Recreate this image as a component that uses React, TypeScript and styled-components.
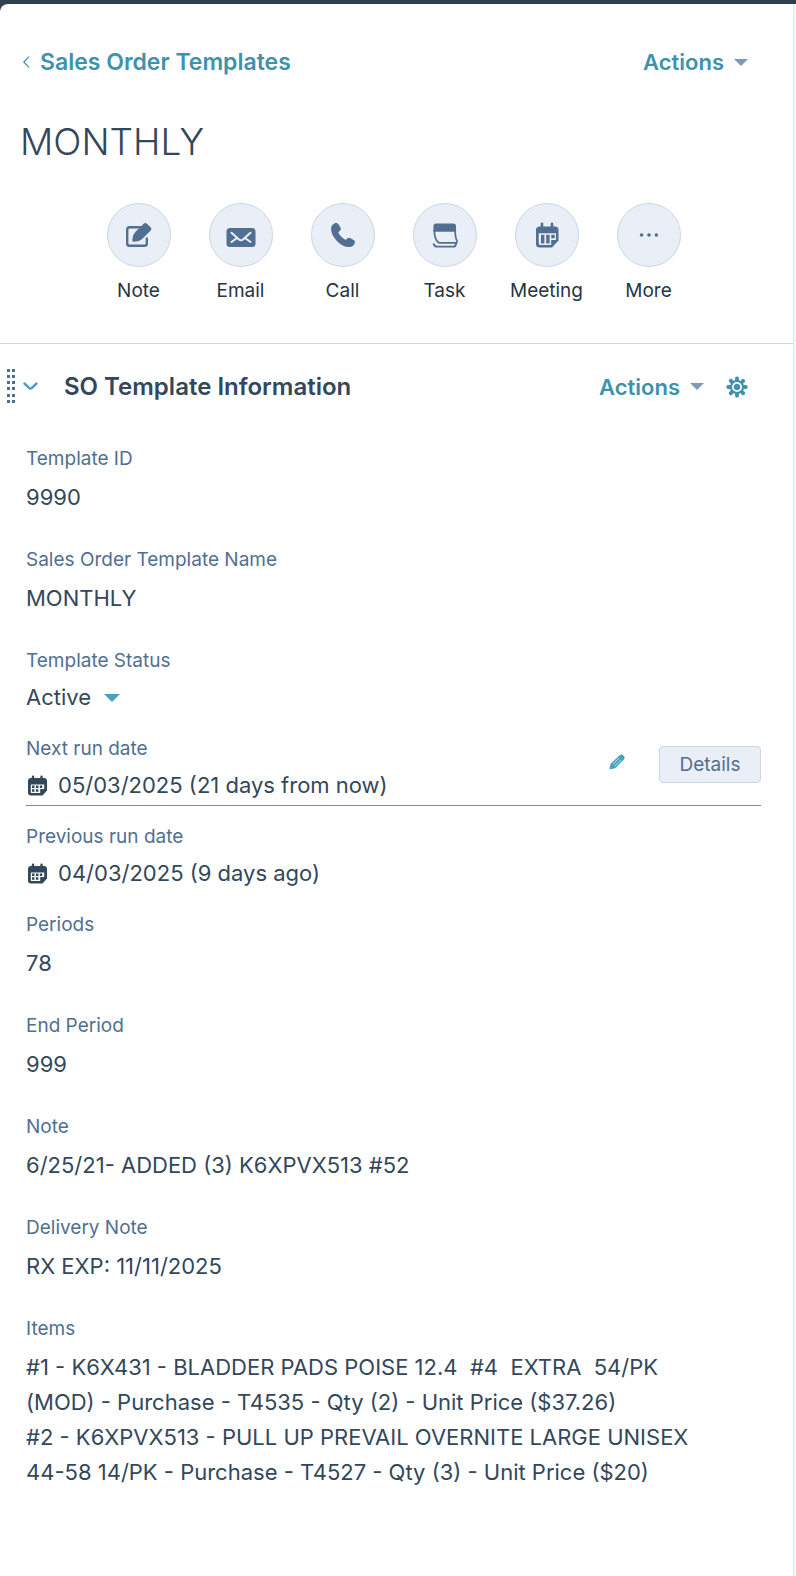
import React from "react";
import styled, { createGlobalStyle } from "styled-components";

const color = {
  navy: "#33475b",
  bar: "#2e3f50",
  slate: "#516f90",
  link: "#4091ad",
  accent: "#45a2bf",
  muted: "#7f97b8",
  fill: "#eaeff7",
  border: "#cbd6e2",
  ink: "#253545",
};

const GlobalStyle = createGlobalStyle`
  *, *::before, *::after { box-sizing: border-box; }
  body {
    margin: 0;
    background: ${color.bar};
    color: ${color.navy};
    font-family: Inter, "Liberation Sans", sans-serif;
    font-weight: 400;
  }
  button, select { font: inherit; color: inherit; }
`;

const Page = styled.div`
  min-height: 100vh;
  display: flex;
  flex-direction: column;
  padding-top: 4px;
`;

const Sidebar = styled.main`
  flex: 1;
  background: #fff;
  border-right: 1px solid #dfe3ee;
  border-top-left-radius: 8px;
`;

const Backdrop = styled.div`
  flex: 1;
  display: flex;
  flex-direction: column;
  padding-right: 2px;
  background: linear-gradient(to left, #f5f8fa 8px, transparent 8px);
`;

const TopRow = styled.header`
  display: flex;
  align-items: center;
  justify-content: space-between;
  padding: 42px 45px 0 22px;
`;

const BackLink = styled.a`
  display: flex;
  align-items: center;
  gap: 10px;
  color: ${color.link};
  font-size: 23px;
  font-weight: 600;
  line-height: 32px;
  text-decoration: none;
`;

const PlainButton = styled.button`
  display: flex;
  align-items: center;
  padding: 0;
  border: 0;
  background: none;
  color: ${color.link};
  cursor: pointer;
`;

const MenuButton = styled(PlainButton)`
  gap: 10px;
  font-size: 22px;
  font-weight: 600;
  line-height: 30px;

  svg { color: ${color.muted}; }
`;

const Title = styled.h1`
  margin: 40px 20px 0;
  font-size: 37px;
  font-weight: 300;
  line-height: 48px;
`;

const QuickActions = styled.nav`
  display: grid;
  grid-template-columns: repeat(6, 102px);
  justify-content: center;
  padding: 37px 6px 40px 0;
`;

const QuickAction = styled.button`
  display: flex;
  flex-direction: column;
  align-items: center;
  gap: 12px;
  padding: 0;
  border: 0;
  background: none;
  color: ${color.ink};
  font-size: 19px;
  line-height: 24px;
  cursor: pointer;
`;

const Circle = styled.span`
  display: grid;
  place-items: center;
  width: 64px;
  height: 64px;
  border: 1px solid ${color.border};
  border-radius: 50%;
  background: ${color.fill};
  color: ${color.slate};
`;

const Card = styled.section`
  border-top: 1px solid ${color.border};
  padding: 25px 32px 60px 0;
`;

const CardHeader = styled.div`
  display: flex;
  align-items: center;
  padding: 0 13px 0 7px;
`;

const DragHandle = styled.span`
  width: 8px;
  height: 35px;
  margin-right: 8px;
  color: ${color.slate};
`;

const CardTitle = styled.h2`
  flex: 1;
  margin: 0 0 0 26px;
  font-size: 24px;
  font-weight: 600;
  line-height: 32px;
`;

const GearButton = styled(PlainButton)`
  margin-left: 22px;
`;

const Fields = styled.dl`
  display: flex;
  flex-direction: column;
  margin: 43px 0 0 26px;
`;

const Field = styled.div<{ $compact?: boolean; $active?: boolean }>`
  display: flex;
  align-items: center;
  margin-bottom: ${(p) => (p.$active ? 19 : p.$compact ? 22 : 33)}px;
  padding-bottom: ${(p) => (p.$active ? 2 : 0)}px;
  border-bottom: ${(p) => (p.$active ? `1px solid ${color.accent}` : "0")};
`;

const FieldBody = styled.div<{ $compact?: boolean }>`
  flex: 1;
  display: flex;
  flex-direction: column;
  gap: ${(p) => (p.$compact ? 7 : 9)}px;
`;

const Label = styled.dt`
  color: ${color.slate};
  font-size: 19px;
  line-height: 24px;
`;

const Value = styled.dd`
  display: flex;
  align-items: center;
  gap: 10px;
  margin: 0;
  font-size: 22px;
  line-height: 35px;
`;

const ItemList = styled.dd`
  margin: 0;
  padding-right: 42px;
  font-size: 22px;
  line-height: 35px;
  white-space: pre-wrap;
`;

const StatusPicker = styled.span`
  display: inline-grid;
  align-items: center;
  color: ${color.navy};

  select, svg { grid-area: 1 / 1; }
  svg { justify-self: end; color: ${color.accent}; pointer-events: none; }
`;

const StatusSelect = styled.select`
  appearance: none;
  padding: 0 28px 0 0;
  border: 0;
  background: none;
  line-height: 35px;
  cursor: pointer;
`;

const PencilButton = styled(PlainButton)`
  margin-right: 34px;
  color: ${color.accent};
`;

const DetailsButton = styled.button`
  height: 37px;
  width: 102px;
  margin-bottom: 12px;
  padding: 0;
  border: 1px solid ${color.border};
  border-radius: 4px;
  background: ${color.fill};
  color: ${color.slate};
  font-size: 19px;
  cursor: pointer;
`;

const RowTools = styled.div`
  display: flex;
  align-items: center;

  ${PencilButton} { margin-bottom: 16px; }
`;

const Caret = ({ width = 14 }: { width?: number }) => (
  <svg width={width} height={width / 2} viewBox="0 0 14 7" fill="currentColor" aria-hidden>
    <path d="M0 0h14L7 7z" />
  </svg>
);

const NoteIcon = () => (
  <svg width="28" height="28" viewBox="0 0 28 28" aria-hidden>
    <path d="M15 6.200H4.500Q2.200 6.200 2.200 8.500V22.500Q2.200 24.800 4.500 24.800H19.500Q21.800 24.800 21.800 22.500V17.500" fill="none" stroke="currentColor" strokeWidth="2.400" strokeLinecap="round" />
    <path d="M7.400 20.600C7.100 16.200 8.300 13 11 10.300L18.700 2.700Q20.400 1.200 22 2.700L25.800 6.500Q27.200 8 25.700 9.600L17.700 17.400C14.900 19.900 11.700 20.900 7.400 20.600Z" fill="currentColor" />
  </svg>
);

const EmailIcon = () => (
  <svg width="30" height="30" viewBox="0 0 30 30" aria-hidden>
    <rect x=".5" y="8" width="29" height="19" rx="3.500" fill="currentColor" />
    <path d="M5.500 12.800L13 19.500Q15 21 17 19.500L24.500 12.800M5.500 22L10.300 18.500M24.500 22L19.700 18.500" fill="none" stroke={color.fill} strokeWidth="2.100" strokeLinecap="round" />
  </svg>
);

const PhoneIcon = () => (
  <svg width="26" height="26" viewBox="0 0 26 26" fill="currentColor" aria-hidden>
    <path d="M3.500 1.900L5.300 1.100Q7.300.5 8.400 2.200L10.600 5.700Q11.400 7.300 10.200 8.600L8.500 10.300Q8.200 11.500 11.500 14.800Q14.600 17.800 15.800 17.700L17.500 16.200Q18.800 15.200 20.300 16L24 18.200Q25.500 19.200 24.900 20.800Q23.500 25 19.400 25Q13 25.300 6.900 18.900Q.9 12.400 1 6.500Q1.200 3.200 3.500 1.900Z" />
  </svg>
);

const TaskIcon = () => (
  <svg width="28" height="28" viewBox="0 0 28 28" aria-hidden>
    <path d="M2.500 10.800V5.300Q2.500 2.500 5.300 2.500H22.200Q25 2.500 25 5.300V10.800Z" fill="currentColor" />
    <path d="M3.300 8.500Q3.200 17.500 7 21.200Q7.600 21.800 8.500 21.800H25Q26.600 21.600 25.900 19.600Q24 16 24.200 8.500" fill="none" stroke="currentColor" strokeWidth="1.700" strokeLinejoin="round" />
    <path d="M2.700 23Q3.200 25.700 6.300 25.700H22.500Q24.700 25.700 25.200 22.500" fill="none" stroke="currentColor" strokeWidth="1.700" strokeLinecap="round" />
  </svg>
);

const MeetingIcon = () => (
  <svg width="26" height="28" viewBox="0 0 26 28" aria-hidden>
    <path d="M8 2.800V8M18 2.800V8" stroke="currentColor" strokeWidth="2.600" strokeLinecap="round" />
    <path d="M5.500 5.500H21Q24.500 5.500 24.500 9V19.500L18 26.500H5.500Q2 26.500 2 23V9Q2 5.500 5.500 5.500Z" fill="currentColor" />
    <path d="M4.700 12.200H22V19H17.200V24H6.500Q4.700 24 4.700 22.200Z" fill={color.fill} />
    <path d="M7 13.800H10.400V22.600H7ZM12.200 13.800H15.600V22.600H12.200ZM17.300 13.800H20.700V17.200H17.300Z" fill="currentColor" />
  </svg>
);

const MoreIcon = () => (
  <svg width="20" height="6" viewBox="0 0 20 6" fill="currentColor" aria-hidden>
    <circle cx="2.600" cy="3" r="1.800" />
    <circle cx="10" cy="3" r="1.800" />
    <circle cx="17.400" cy="3" r="1.800" />
  </svg>
);

const CalendarIcon = () => (
  <svg width="22" height="22" viewBox="0 0 22 22" aria-hidden>
    <path d="M7 1.800V6M15.500 1.800V6" stroke="currentColor" strokeWidth="2.400" strokeLinecap="round" />
    <path d="M5 3H18Q21 3 21 6V15.500L16.500 20.500H5Q2 20.500 2 17.500V6Q2 3 5 3Z" fill="currentColor" />
    <path d="M4.800 9.500H18.200V14H14.200V18H4.800Z" fill="#fff" />
    <path d="M6 10.400H8.500V12.900H6ZM9.900 10.400H12.400V12.900H9.900ZM13.800 10.400H16.300V12.900H13.800ZM6 14.300H8.500V16.800H6ZM9.900 14.300H12.400V16.800H9.900Z" fill="currentColor" />
  </svg>
);

const GearIcon = () => (
  <svg width="22" height="22" viewBox="-11 -11 22 22" aria-hidden>
    <g fill="currentColor">
      {[0, 45, 90, 135].map((angle) => (
        <rect key={angle} x="-1.900" y="-10.600" width="3.800" height="21.200" rx="1.600" transform={`rotate(${angle})`} />
      ))}
      <circle r="7.100" />
    </g>
    <circle r="4.200" fill="none" stroke="#fff" strokeWidth="1.700" />
  </svg>
);

const PencilIcon = () => (
  <svg width="16" height="16" viewBox="0 0 16 16" aria-hidden>
    <path d="M.4 15.600L1.600 9.800L10.600 1.200Q12.500-.3 14.100 1.200L14.900 2Q16.300 3.600 14.900 5.400L6.200 14.300Z" fill="currentColor" />
    <path d="M3.900 10.300L10.300 3.800M5.700 12.200L12.100 5.700" stroke="#fff" strokeWidth=".7" />
  </svg>
);

const HandleIcon = () => (
  <svg width="8" height="35" viewBox="0 0 8 35" fill="currentColor" aria-hidden>
    {[0, 6, 12, 18, 25, 31].map((y) => (
      <path key={y} d={`M0 ${y}h3v3h-3zM5 ${y}h3v3h-3z`} />
    ))}
  </svg>
);

const quickActions = [
  { label: "Note", Icon: NoteIcon },
  { label: "Email", Icon: EmailIcon },
  { label: "Call", Icon: PhoneIcon },
  { label: "Task", Icon: TaskIcon },
  { label: "Meeting", Icon: MeetingIcon },
  { label: "More", Icon: MoreIcon },
];

const items = [
  "#1 - K6X431 - BLADDER PADS POISE 12.4  #4  EXTRA  54/PK (MOD) - Purchase - T4535 - Qty (2) - Unit Price ($37.26)",
  "#2 - K6XPVX513 - PULL UP PREVAIL OVERNITE LARGE UNISEX 44-58 14/PK - Purchase - T4527 - Qty (3) - Unit Price ($20)",
];

function TextField({ label, children, compact }: { label: string; children: React.ReactNode; compact?: boolean }) {
  return (
    <Field $compact={compact}>
      <FieldBody $compact={compact}>
        <Label>{label}</Label>
        <Value>{children}</Value>
      </FieldBody>
    </Field>
  );
}

export default function App() {
  return (
    <Page>
      <GlobalStyle />
      <Backdrop>
        <Sidebar>
          <TopRow>
            <BackLink href="#templates">
              <svg width="8" height="12" viewBox="0 0 8 12" fill="none" stroke="currentColor" strokeWidth="1.200" aria-hidden>
                <path d="M7 .6L1.800 6L7 11.400" />
              </svg>
              Sales Order Templates
            </BackLink>
            <MenuButton type="button">
              Actions <Caret />
            </MenuButton>
          </TopRow>

          <Title>MONTHLY</Title>

          <QuickActions aria-label="Quick actions">
            {quickActions.map(({ label, Icon }) => (
              <QuickAction key={label} type="button">
                <Circle>
                  <Icon />
                </Circle>
                {label}
              </QuickAction>
            ))}
          </QuickActions>

          <Card>
            <CardHeader>
              <DragHandle>
                <HandleIcon />
              </DragHandle>
              <PlainButton type="button" aria-label="Collapse section">
                <svg width="15" height="9" viewBox="0 0 15 9" fill="none" stroke={color.accent} strokeWidth="2.400" strokeLinecap="round" aria-hidden>
                  <path d="M1.500 1.500L6.300 6Q7.500 7.200 8.700 6L13.500 1.500" />
                </svg>
              </PlainButton>
              <CardTitle>SO Template Information</CardTitle>
              <MenuButton type="button">
                Actions <Caret />
              </MenuButton>
              <GearButton type="button" aria-label="Section settings">
                <GearIcon />
              </GearButton>
            </CardHeader>

            <Fields>
              <TextField label="Template ID">9990</TextField>
              <TextField label="Sales Order Template Name">MONTHLY</TextField>
              <TextField label="Template Status" compact>
                <StatusPicker>
                  <StatusSelect aria-label="Template Status" defaultValue="Active">
                    <option>Active</option>
                  </StatusSelect>
                  <Caret width={16} />
                </StatusPicker>
              </TextField>
              <Field $active>
                <FieldBody $compact>
                  <Label>Next run date</Label>
                  <Value>
                    <CalendarIcon />
                    05/03/2025 (21 days from now)
                  </Value>
                </FieldBody>
                <RowTools>
                  <PencilButton type="button" aria-label="Edit next run date">
                    <PencilIcon />
                  </PencilButton>
                  <DetailsButton type="button">Details</DetailsButton>
                </RowTools>
              </Field>
              <TextField label="Previous run date" compact>
                <CalendarIcon />
                04/03/2025 (9 days ago)
              </TextField>
              <TextField label="Periods">78</TextField>
              <TextField label="End Period">999</TextField>
              <TextField label="Note">6/25/21- ADDED (3) K6XPVX513 #52</TextField>
              <TextField label="Delivery Note">RX EXP: 11/11/2025</TextField>
              <Field>
                <FieldBody>
                  <Label>Items</Label>
                  <ItemList>{items.join("\n")}</ItemList>
                </FieldBody>
              </Field>
            </Fields>
          </Card>
        </Sidebar>
      </Backdrop>
    </Page>
  );
}
